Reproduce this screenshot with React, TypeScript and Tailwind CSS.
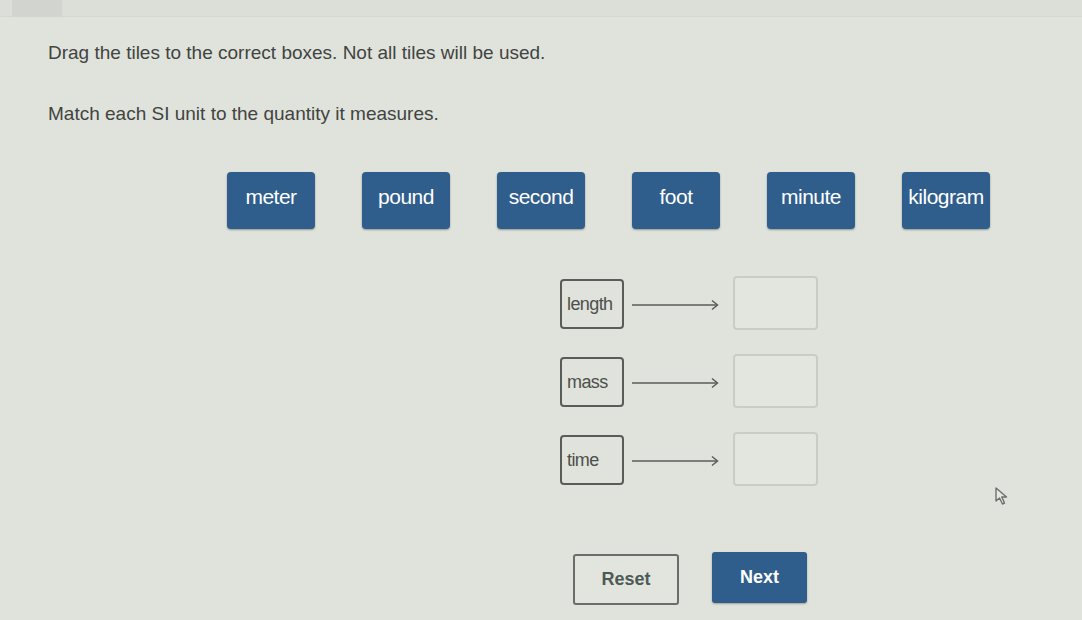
import React from 'react';

const units = ['meter', 'pound', 'second', 'foot', 'minute', 'kilogram'];
const quantities = ['length', 'mass', 'time'];

const Arrow: React.FC = () => (
  <svg width="88" height="12" viewBox="0 0 88 12" className="shrink-0">
    <line x1="0" y1="6" x2="85" y2="6" stroke="#5a5d5a" strokeWidth="1.5" />
    <polyline points="80,1.5 85.5,6 80,10.5" fill="none" stroke="#5a5d5a" strokeWidth="1.5" />
  </svg>
);

const Pointer: React.FC = () => (
  <svg width="16" height="20" viewBox="0 0 16 20" className="absolute left-[994px] top-[486px]">
    <path d="M2 2 L2 15 L5.5 12 L8.5 18 L10.5 17 L7.8 11 L12.5 11 Z" fill="#e6e8e2" stroke="#6d706c" strokeWidth="1.4" strokeLinejoin="round" />
  </svg>
);

export default function App() {
  return (
    <div className="relative w-[1082px] h-[620px] overflow-hidden bg-[#e0e3dc] font-['Liberation_Sans',Arial,sans-serif] text-[#414441]">
      {/* top strip with the question tab */}
      <div className="h-[17px] bg-[#dbdfd8] border-b border-[#d3d7d0] flex">
        <div className="ml-[12px] w-[50px] h-[17px] bg-[#d2d5cf]" />
      </div>

      <p className="mt-[24px] ml-[48px] text-[19px] leading-[24px]">
        Drag the tiles to the correct boxes. Not all tiles will be used.
      </p>
      <p className="mt-[37px] ml-[48px] text-[19px] leading-[24px]">
        Match each SI unit to the quantity it measures.
      </p>

      {/* answer tiles */}
      <div className="mt-[46px] ml-[227px] flex gap-[47px]">
        {units.map((u) => (
          <div
            key={u}
            className="w-[88px] h-[57px] rounded-[4px] bg-[#2f5e8c] shadow-[0_1px_2px_rgba(0,0,0,0.35)] flex items-center justify-center pb-[7px] text-white text-[21px] font-medium tracking-[-0.5px]"
          >
            {u}
          </div>
        ))}
      </div>

      {/* quantity rows with drop targets */}
      <div className="mt-[47px] ml-[560px] flex flex-col gap-[24px]">
        {quantities.map((q) => (
          <div key={q} className="flex items-center h-[54px]">
            <div className="w-[64px] h-[50px] mt-[2px] rounded-[4px] border-2 border-[#595c59] flex items-center pl-[5px] text-[18px] text-[#4c4f4c] tracking-[-0.6px]">
              {q}
            </div>
            <div className="ml-[8px] mt-[4px]">
              <Arrow />
            </div>
            <div className="ml-[13px] w-[85px] h-[54px] rounded-[4px] border-2 border-[#c9cdc6] bg-[#e3e6df]" />
          </div>
        ))}
      </div>

      {/* footer buttons */}
      <div className="mt-[68px] ml-[573px] flex items-end gap-[33px]">
        <button className="w-[106px] h-[51px] rounded-[3px] border-2 border-[#6a6d6a] bg-[#e2e5de] text-[18px] font-bold text-[#4c5a57]">
          Reset
        </button>
        <button className="w-[95px] h-[51px] -translate-y-[2px] rounded-[3px] bg-[#2f5e8c] text-[18px] font-bold text-white shadow-[0_1px_2px_rgba(0,0,0,0.3)]">
          Next
        </button>
      </div>

      <Pointer />
    </div>
  );
}
